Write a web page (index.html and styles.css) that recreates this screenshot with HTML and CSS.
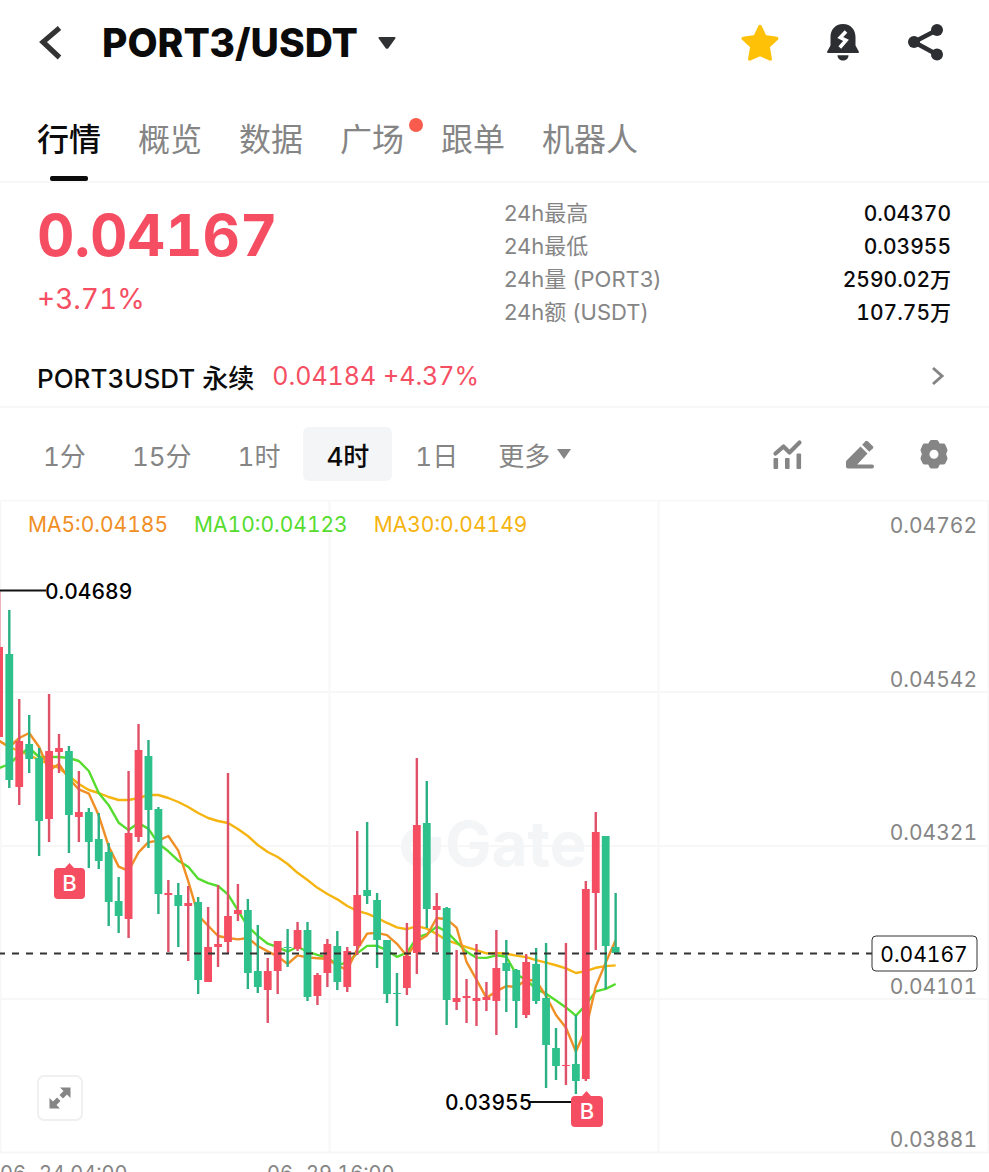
FILE: index.html
```html
<!DOCTYPE html>
<html lang="zh-CN">
<head>
<meta charset="utf-8">
<meta name="viewport" content="width=device-width, initial-scale=1">
<title>PORT3/USDT</title>
<link rel="stylesheet" href="styles.css">
</head>
<body>
<header class="topbar">
  <button class="icon-btn back" aria-label="返回">
    <svg width="26" height="38" viewBox="0 0 26 38"><path d="M22.500 4 6 18l16.500 15.500" fill="none" stroke="#333" stroke-width="5.200"/></svg>
  </button>
  <button class="pair"><h1>PORT3/USDT</h1>
    <svg width="18" height="12" viewBox="0 0 18 12"><path d="M1.500 0h15q1.600.2.800 1.600l-7 9.600q-1.300 1.300-2.600 0l-7-9.600Q-.1.200 1.500 0z" fill="#303133"/></svg>
  </button>
  <div class="actions">
    <button class="icon-btn" aria-label="收藏">
      <svg width="40" height="40" viewBox="0 0 40 40"><path d="M20 3.500l4.900 10.200 11.800 1.700-8.600 8.100 2.100 12.500L20 31.400 9.800 36l2.100-12.500-8.600-8.100 11.800-1.700z" fill="#ffc107" stroke="#ffc107" stroke-width="3.500" stroke-linejoin="round"/></svg>
    </button>
    <button class="icon-btn" aria-label="提醒">
      <svg width="40" height="40" viewBox="0 0 40 40"><path d="M20 1C12 1 7.500 7 7.500 14v8.500L4.200 28.500Q3.600 30 5 30h30q1.400 0 .8-1.500L32.500 22.500V14C32.500 7 28 1 20 1z" fill="#2d2e31"/><path d="M14.500 32.200h11c0 7-11 7-11 0z" fill="#2d2e31"/><path d="M23 8.500 17.300 14.500 23 17.300 16.800 24.500" fill="none" stroke="#fff" stroke-width="3.600"/></svg>
    </button>
    <button class="icon-btn" aria-label="分享">
      <svg width="40" height="40" viewBox="0 0 40 40"><path d="M31 7 8 19l23 12.500" fill="none" stroke="#2d2e31" stroke-width="4.600"/><circle cx="31" cy="7" r="6" fill="#2d2e31"/><circle cx="8" cy="19" r="6" fill="#2d2e31"/><circle cx="31" cy="31.500" r="6" fill="#2d2e31"/></svg>
    </button>
  </div>
</header>

<nav class="tabs">
  <a href="#" class="tab active">行情</a>
  <a href="#" class="tab">概览</a>
  <a href="#" class="tab">数据</a>
  <a href="#" class="tab dotted">广场</a>
  <a href="#" class="tab">跟单</a>
  <a href="#" class="tab">机器人</a>
</nav>

<main>
<section class="summary">
  <div class="quote">
    <div class="price">0.04167</div>
    <div class="change">+3.71%</div>
  </div>
  <dl class="stats">
    <div class="stat"><dt>24h最高</dt><dd>0.04370</dd></div>
    <div class="stat"><dt>24h最低</dt><dd>0.03955</dd></div>
    <div class="stat"><dt>24h量 (PORT3)</dt><dd>2590.02万</dd></div>
    <div class="stat"><dt>24h额 (USDT)</dt><dd>107.75万</dd></div>
  </dl>
</section>

<a href="#" class="perp">
  <span class="perp-name">PORT3USDT 永续</span>
  <span class="perp-quote">0.04184 +4.37%</span>
  <svg class="perp-arrow" width="16" height="22" viewBox="0 0 16 22"><path d="M3 3l9 8-9 8" fill="none" stroke="#858585" stroke-width="3"/></svg>
</a>

<div class="toolbar">
  <div class="frames">
    <button class="frame">1分</button>
    <button class="frame">15分</button>
    <button class="frame">1时</button>
    <button class="frame selected">4时</button>
    <button class="frame">1日</button>
    <button class="frame more">更多<svg width="14" height="10" viewBox="0 0 14 10"><path d="M0 0h14L7 10z" fill="#858585"/></svg></button>
  </div>
  <div class="tools">
    <button class="icon-btn" aria-label="指标">
      <svg width="32" height="32" viewBox="0 0 32 32"><path d="M3.500 15.500 11.500 8.500l6 6L27.500 4.500" fill="none" stroke="#858585" stroke-linecap="round" stroke-linejoin="round" stroke-width="4.200"/><g fill="#858585"><rect x="1.500" y="20" width="4.600" height="11" rx="1"/><rect x="13" y="20" width="4.600" height="11" rx="1"/><rect x="24.500" y="15.500" width="4.600" height="15.500" rx="1"/></g></svg>
    </button>
    <button class="icon-btn" aria-label="画图">
      <svg width="32" height="32" viewBox="0 0 32 32"><g fill="#858585"><path d="M15.500 8.500 22.500 15.500 12.200 26.500H27q2 0 2 2t-2 2H3Q1 30.500 1 28.500V24q0-1 .8-1.800z"/><path d="M17.200 6.800 20.400 3.200q1.200-1 2.400 0l5 5q1 1.200 0 2.400l-3.600 3.200z"/></g></svg>
    </button>
    <button class="icon-btn" aria-label="设置">
      <svg width="32" height="32" viewBox="0 0 32 32"><path d="M13.500 4h5L20.500 7.500 25.500 7.500 27.500 12 26 16 27.500 20.500 25.500 24.500 20.500 24.500 18.500 28.500h-5L11.500 24.500 6.500 24.500 4.500 20.500 6 16 4.500 12 6.500 7.500 11.500 7.500z" fill="#858585" stroke="#858585" stroke-width="4" stroke-linejoin="round"/><circle cx="16" cy="16.200" r="4.500" fill="#fff"/></svg>
    </button>
  </div>
</div>

<section class="chart">
  <svg class="plot" viewBox="0 500 989 672" role="img" aria-label="K线图">
    <g class="grid">
      <path d="M0 500.500H989M0 692H989M0 846H989M0 999H989M0 1152.500H989M.5 500V1152M329.500 500V1152M658.500 500V1152M988.500 500V1152"/>
    </g>
    <g class="watermark">
      <path d="M421 827a20 20 0 1 0 20 20h-10a10 10 0 1 1-10-10zM431 837h10v10h-10z"/>
      <text x="445" y="866">Gate</text>
    </g>
    <g id="averages"></g>
    <g id="candles"></g>
    <path class="current" d="M-2 953.500H872"/>
    <path class="leader" d="M0 590.500H46M530 1102H572"/>
    <text class="extreme" x="45" y="599">0.04689</text>
    <text class="extreme" x="445" y="1110">0.03955</text>
    <g class="buy">
      <path d="M65 868l4.500-5 4.500 5h7q4 0 4 4v23q0 4-4 4H58q-4 0-4-4v-23q0-4 4-4z"/>
      <text x="69.500" y="891">B</text>
      <path d="M582 1096l4.500-5 4.500 5h8q4 0 4 4v23q0 4-4 4h-24q-4 0-4-4v-23q0-4 4-4z"/>
      <text x="587" y="1119">B</text>
    </g>
    <g class="axis">
      <text x="977" y="533">0.04762</text>
      <text x="977" y="687">0.04542</text>
      <text x="977" y="840">0.04321</text>
      <text x="977" y="994">0.04101</text>
      <text x="977" y="1147">0.03881</text>
    </g>
    <g class="tag">
      <rect x="872" y="936" width="105" height="35" rx="4"/>
      <text x="924" y="962">0.04167</text>
    </g>
    <g class="dates">
      <text x="0" y="1180">06-24 04:00</text>
      <text x="267" y="1180">06-29 16:00</text>
    </g>
  </svg>
  <div class="legend">
    <span class="ma5">MA5:0.04185</span>
    <span class="ma10">MA10:0.04123</span>
    <span class="ma30">MA30:0.04149</span>
  </div>
  <button class="expand" aria-label="全屏">
    <svg width="24" height="24" viewBox="0 0 24 24"><g fill="#858585"><path d="M12 1.500h10.500V12l-3.500-3.500-4 4-3.500-3.500 4-4z"/><path d="M12 22.500H1.500V12L5 15.500l4-4 3.500 3.500-4 4z"/></g></svg>
  </button>
</section>
</main>
<script src="chart.js"></script>
</body>
</html>
```

FILE: styles.css
```css
* { box-sizing: border-box; }
body {
  margin: 0;
  background: #fff;
  color: #0b0b0c;
  font-family: Inter, "Noto Sans CJK SC", sans-serif;
  font-variant-numeric: tabular-nums;
}
button {
  margin: 0;
  padding: 0;
  border: 0;
  background: none;
  font: inherit;
  font-variant-numeric: inherit;
  color: inherit;
  cursor: pointer;
}
a { color: inherit; text-decoration: none; }
svg { display: block; }

.topbar {
  display: flex;
  align-items: center;
  height: 86px;
  padding: 0 43px 0 37px;
}
.pair {
  display: flex;
  align-items: center;
  gap: 20px;
  margin-left: 39px;
}
.pair h1 {
  margin: 0;
  font-size: 39px;
  line-height: 48px;
  font-weight: 800;
}
.actions {
  display: flex;
  gap: 43px;
  margin-left: auto;
}

.tabs {
  display: flex;
  gap: 37px;
  height: 97px;
  padding: 30px 37px 0;
  border-bottom: 2px solid #f7f7f8;
}
.tab {
  position: relative;
  font-size: 32px;
  line-height: 48px;
  color: #858585;
}
.tab.active { color: #0b0b0c; font-weight: 500; }
.tab.active::after {
  content: "";
  position: absolute;
  left: 13px;
  bottom: 0;
  width: 38px;
  height: 5px;
  border-radius: 2px;
  background: #0b0b0c;
}
.tab.dotted::after {
  content: "";
  position: absolute;
  top: 2px;
  right: -19px;
  width: 14px;
  height: 14px;
  border-radius: 50%;
  background: #f75c4c;
}

.summary {
  display: grid;
  grid-template-columns: 467fr 447fr;
  padding: 14px 38px 0 37px;
}
.price {
  font-size: 58px;
  line-height: 76px;
  font-weight: 700;
  color: #f54e62;
}
.change {
  margin-top: 8px;
  font-size: 28px;
  line-height: 36px;
  color: #f54e62;
}
.stats { margin: 0; }
.stat {
  display: flex;
  justify-content: space-between;
  font-size: 22px;
  line-height: 33px;
}
.stat dt { color: #858585; font-variant-numeric: normal; }
.stat dd { margin: 0; font-weight: 500; font-size: 21px; }

.perp {
  display: flex;
  align-items: center;
  gap: 18px;
  height: 62px;
  margin-top: 17px;
  padding: 0 43px 0 37px;
  border-bottom: 2px solid #f7f7f8;
  font-size: 25px;
}
.perp-name { font-size: 26px; font-weight: 500; }
.perp-quote { color: #f54e62; }
.perp-arrow { margin-left: auto; }

.toolbar {
  display: flex;
  align-items: center;
  justify-content: space-between;
  height: 92px;
  padding: 0 39px 0 20px;
}
.frames { display: flex; }
.frame {
  display: flex;
  align-items: center;
  gap: 7px;
  height: 54px;
  padding: 0 23px;
  border-radius: 6px;
  font-size: 26px;
  color: #858585;
}
.frame.more { padding-left: 17px; }
.frame.selected {
  background: #f4f5f6;
  color: #0b0b0c;
  font-weight: 500;
}
.tools { display: flex; gap: 41px; }

.chart { position: relative; }
.plot { width: 100%; height: auto; }
.plot text { font-size: 22px; }
.grid { stroke: #f7f7f8; stroke-width: 2; }
.watermark { fill: #f4f5f6; }
.plot .watermark text { font-size: 62px; font-weight: 700; }
.average { fill: none; stroke-linejoin: round; }
.up { fill: #f54e62; }
.down { fill: #2fc18c; }
.wick-up { fill: #df5069; }
.wick-down { fill: #2bb083; }
.current { stroke: #333; stroke-width: 2; stroke-dasharray: 7 7; }
.leader { stroke: #111; stroke-width: 2; }
.plot .extreme { font-size: 21px; font-weight: 500; }
.buy path { fill: #f54e62; }
.buy text { fill: #fff; font-weight: 500; text-anchor: middle; }
.plot .axis text { fill: #858585; text-anchor: end; font-size: 21px; }
.tag rect { fill: #fff; stroke: #333; stroke-width: 1; }
.plot .tag text { text-anchor: middle; font-size: 21px; }
.plot .dates text { fill: #858585; font-size: 20px; }

.legend {
  position: absolute;
  top: 10px;
  left: 28px;
  display: flex;
  gap: 26px;
  font-size: 21px;
  line-height: 30px;
}
.ma5 { color: #f08f25; }
.ma10 { color: #55dc2e; }
.ma30 { color: #f5b40f; }

.expand {
  position: absolute;
  left: 37px;
  bottom: 51px;
  display: grid;
  place-items: center;
  width: 46px;
  height: 46px;
  border: 2px solid #f0f0f1;
  border-radius: 7px;
  background: #fff;
}
```

FILE: chart.js
```js
// Each candle: direction (1 = up, 0 = down), high, body top, body bottom, low.
const candles = [
  [0,610,654,780,788],[1,699,741,787,805],[0,715,744,759,773],[0,748,758,821,856],
  [1,694,751,819,842],[1,734,748,752,773],[0,746,751,815,853],[1,771,812,817,842],
  [0,808,812,842,868],[0,813,839,861,869],[0,843,852,902,926],[0,877,901,916,933],
  [1,771,833,919,938],[1,724,750,837,842],[0,740,756,810,848],[0,807,809,894,914],
  [1,880,893,895,952],[0,883,895,906,947],[1,886,903,906,961],[0,897,902,980,994],
  [1,907,947,982,982],[1,885,944,947,967],[1,773,916,942,953],[1,884,910,914,921],
  [0,899,910,973,989],[0,925,971,987,993],[1,958,971,990,1023],[1,941,941,971,994],
  [0,929,947,948,967],[1,922,930,949,951],[0,922,930,997,1001],[1,973,975,996,1005],
  [1,939,944,973,987],[0,931,946,982,990],[1,947,951,987,992],[1,831,895,946,955],
  [0,822,890,896,904],[0,893,900,940,968],[0,940,940,994,1003],[0,973,993,994,1026],
  [1,923,956,988,995],[1,758,825,953,974],[0,781,823,909,928],[1,893,906,910,952],
  [0,907,908,1000,1025],[1,950,998,1002,1010],[1,979,996,998,1023],[1,944,998,1001,1026],
  [1,982,997,1000,1011],[1,930,968,1001,1035],[0,940,963,971,1012],[0,969,970,1001,1028],
  [1,954,962,1015,1018],[0,948,964,1001,1004],[0,943,998,1045,1088],[0,1028,1048,1066,1080],
  [1,943,1065,1066,1085],[0,1015,1064,1081,1094],[1,881,889,1079,1081],[1,812,832,893,950],
  [0,836,836,946,989],[0,893,947,953,953]
];
const first = 9.3, step = 9.94;
const xOf = i => first + i * step;
const closes = candles.map(c => c[0] ? c[2] : c[3]);
const NS = "http://www.w3.org/2000/svg";

function add(parent, name, attrs) {
  const el = document.createElementNS(NS, name);
  for (const key in attrs) el.setAttribute(key, attrs[key]);
  parent.appendChild(el);
}

// Averages before the window is full come from earlier history.
const averages = [
  { period: 30, color: "#f5b40f", lead: [741,747,751,755,760,764,768,776,784,790,793,797,800,800,798,795,795,798,802,807,813,818,821,823,829,836,845,852,857,864] },
  { period: 10, color: "#55dc2e", lead: [768,764,755,748,757,757,757,758,761,771] },
  { period: 5, color: "#f08f25", lead: [741,747,738,733,747] }
];
const lines = document.getElementById("averages");
for (const { period, color, lead } of averages) {
  const pts = lead.map((y, k) => [xOf(k - 1), y]);
  for (let i = period - 1; i < closes.length; i++) {
    const sum = closes.slice(i - period + 1, i + 1).reduce((a, b) => a + b, 0);
    pts.push([xOf(i), sum / period]);
  }
  add(lines, "polyline", { class: "average", stroke: color, "stroke-width": 2.4, points: pts.map(p => p.join(",")).join(" ") });
}

const layer = document.getElementById("candles");
add(layer, "rect", { class: "wick-up", x: -1, y: 590, width: 2, height: 60, opacity: 0.4 });
add(layer, "rect", { class: "up", x: -5, y: 647, width: 8, height: 90 });
candles.forEach(([up, high, top, bottom, low], i) => {
  const x = xOf(i);
  const kind = up ? "up" : "down";
  add(layer, "rect", { class: "wick-" + kind, x: x - 1.2, y: high, width: 2.4, height: low - high });
  add(layer, "rect", { class: kind, x: x - 3.9, y: top, width: 7.8, height: Math.max(bottom - top, 1) });
});
```
